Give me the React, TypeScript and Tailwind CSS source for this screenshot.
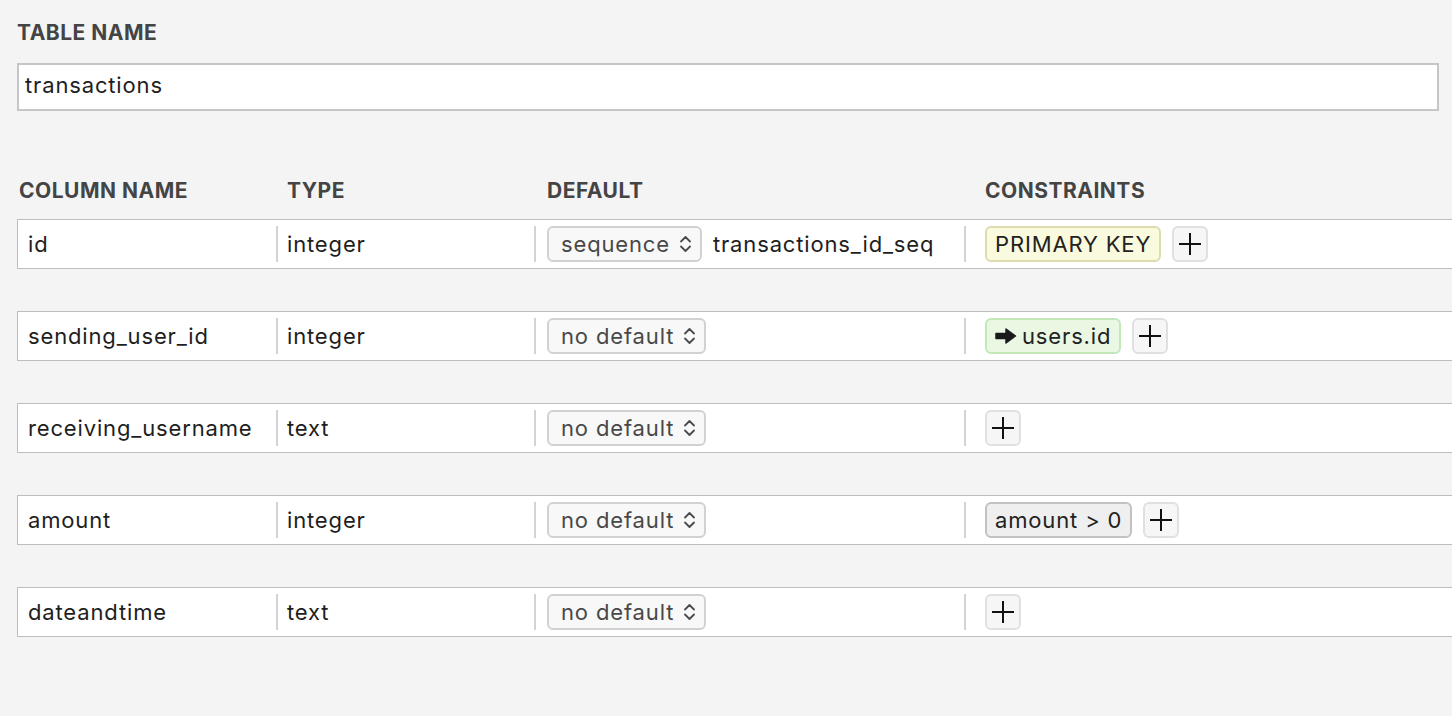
const font = { fontFamily: "Inter, 'Noto Sans', sans-serif" };

type Constraint = { kind: "pk" | "fk" | "check"; label: string };

type Col = {
  name: string;
  type: string;
  def: string;
  seq?: string;
  constraints: Constraint[];
};

const columns: Col[] = [
  { name: "id", type: "integer", def: "sequence", seq: "transactions_id_seq", constraints: [{ kind: "pk", label: "PRIMARY KEY" }] },
  { name: "sending_user_id", type: "integer", def: "no default", constraints: [{ kind: "fk", label: "users.id" }] },
  { name: "receiving_username", type: "text", def: "no default", constraints: [] },
  { name: "amount", type: "integer", def: "no default", constraints: [{ kind: "check", label: "amount > 0" }] },
  { name: "dateandtime", type: "text", def: "no default", constraints: [] },
];

function Chevrons() {
  return (
    <svg width="13" height="22" viewBox="0 0 13 22" fill="none" stroke="#4a4a4a" strokeWidth="1.8" strokeLinecap="round" strokeLinejoin="round">
      <path d="M2 8.5 L6.5 4 L11 8.5" />
      <path d="M2 13.5 L6.5 18 L11 13.5" />
    </svg>
  );
}

function Arrow() {
  return (
    <svg width="22" height="18" viewBox="0 0 22 18" className="mr-[5px]">
      <path d="M1 6.5 H11 V2 L20.5 9 L11 16 V11.5 H1 Z" fill="#1a1a1a" strokeLinejoin="round" stroke="#1a1a1a" strokeWidth="1.5" />
    </svg>
  );
}

function PlusButton() {
  return (
    <button className="w-[36px] h-[36px] rounded-[6px] border-2 border-[#e0e0e0] bg-[#f6f6f6] flex items-center justify-center shrink-0">
      <svg width="24" height="24" viewBox="0 0 24 24" stroke="#111" strokeWidth="2">
        <path d="M12 1 V23 M1 12 H23" />
      </svg>
    </button>
  );
}

function Badge({ c }: { c: Constraint }) {
  const styles = {
    pk: "bg-[#fafade] border-[#dddcae]",
    fk: "bg-[#e9f7e3] border-[#c4e7ba]",
    check: "bg-[#efefef] border-[#c2c2c2]",
  }[c.kind];
  return (
    <div className={`h-[36px] rounded-[6px] border-2 px-[8px] flex items-center text-[#222] ${styles}`}>
      {c.kind === "fk" && <Arrow />}
      {c.label}
    </div>
  );
}

function Sep() {
  return <div className="w-[2px] h-[36px] bg-[#d4d4d4] shrink-0" />;
}

function Row({ col }: { col: Col }) {
  return (
    <div className="flex items-center h-[50px] border border-r-0 border-[#bcbcbc] bg-white text-[22px] tracking-[0.85px] text-[#1e1e1e]">
      <div className="w-[258px] pl-[10px] shrink-0">{col.name}</div>
      <Sep />
      <div className="w-[256px] pl-[9px] shrink-0">{col.type}</div>
      <Sep />
      <div className="w-[428px] pl-[11px] shrink-0 flex items-center gap-[11px]">
        <div className="h-[36px] rounded-[6px] border-2 border-[#d2d2d2] bg-[#f8f8f8] pl-[12px] pr-[8px] flex items-center gap-[9px] text-[#484848]">
          <span>{col.def}</span>
          <Chevrons />
        </div>
        {col.seq && <span>{col.seq}</span>}
      </div>
      <Sep />
      <div className="pl-[19px] flex items-center gap-[11px]">
        {col.constraints.map((c) => (
          <Badge key={c.label} c={c} />
        ))}
        <PlusButton />
      </div>
    </div>
  );
}

export default function App() {
  return (
    <div className="min-h-screen w-full bg-[#f4f4f4] overflow-hidden" style={font}>
      <div className="pl-[17px] pt-[21px]">
        <div className="text-[21px] tracking-[0.5px] font-bold text-[#444] leading-[24px] h-[24px]">TABLE NAME</div>
        <div className="mt-[18px] w-[1422px] h-[48px] border-2 border-[#c6c6c6] bg-white flex items-center pl-[6px] pb-[3px] text-[22px] tracking-[0.85px] text-[#1e1e1e]">
          transactions
        </div>

        <div className="mt-[68px] flex text-[21px] tracking-[0.5px] font-bold text-[#444] leading-[24px] h-[24px]">
          <div className="w-[270px] pl-[2px]">COLUMN NAME</div>
          <div className="w-[260px]">TYPE</div>
          <div className="w-[438px]">DEFAULT</div>
          <div>CONSTRAINTS</div>
        </div>

        <div className="mt-[16px] flex flex-col gap-[42px]">
          {columns.map((c) => (
            <Row key={c.name} col={c} />
          ))}
        </div>
      </div>
    </div>
  );
}
